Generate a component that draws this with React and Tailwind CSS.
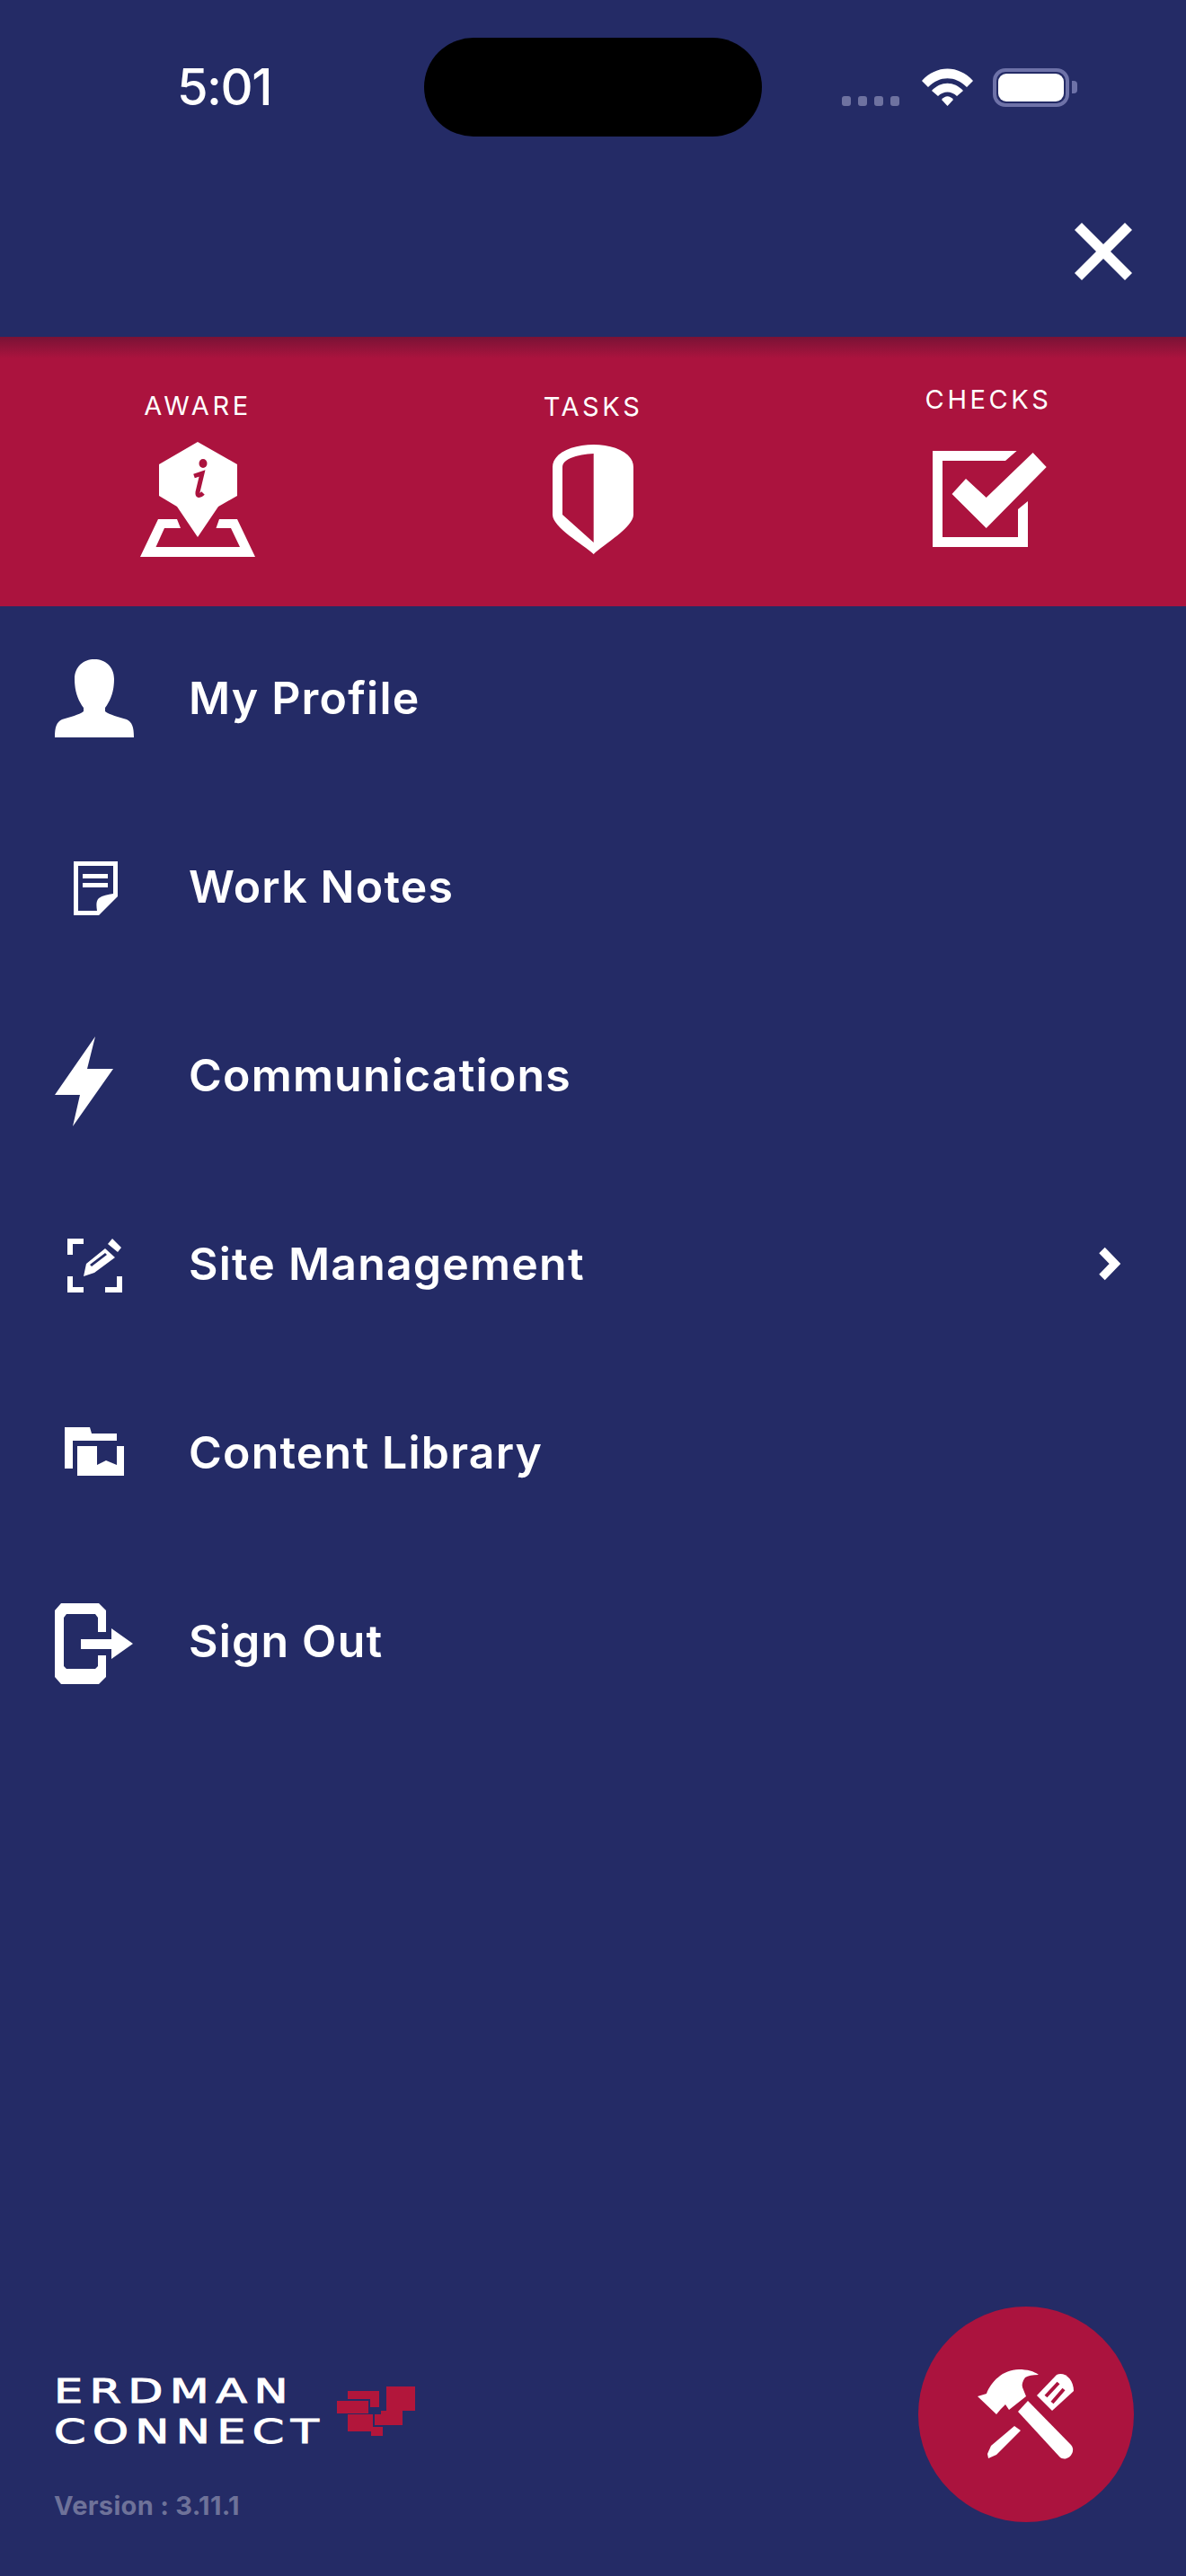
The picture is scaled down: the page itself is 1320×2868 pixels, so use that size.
const menu = [
  ["My Profile", "profile"],
  ["Work Notes", "notes"],
  ["Communications", "bolt"],
  ["Site Management", "site", true],
  ["Content Library", "library"],
  ["Sign Out", "signout"],
];

function Svg({ box, children }) {
  const [x, y, w, h] = box;
  return (
    <svg viewBox={`${x} ${y} ${w} ${h}`} width={w} height={h} className="overflow-visible" fill="white">
      {children}
    </svg>
  );
}

function MenuIcon({ name }) {
  if (name === "profile")
    return (
      <Svg box={[60, 732, 92, 90]}>
        <path d="M105 734C93 734 83 742 83 756C83 770 87 780 93 788V792C88 796 78 798 69 801C63 804 61 809 61 821H149C149 809 147 804 141 801C132 798 122 796 117 792V788C123 780 127 770 127 756C127 742 117 734 105 734Z" />
      </Svg>
    );
  if (name === "notes")
    return (
      <Svg box={[60, 942, 92, 90]}>
        <path fillRule="evenodd" d="M82 959H131V998L110 1019H82ZM87 964V1014H108C107 1007 107 1003 110 1000C114 997 120 996 126 995V964Z" />
        <rect x="92" y="973" width="28" height="5" />
        <rect x="92" y="983" width="28" height="5" />
      </Svg>
    );
  if (name === "bolt")
    return (
      <Svg box={[60, 1152, 92, 90]}>
        <path d="M106 1154L61 1219L89 1219L81 1254L126 1190L97 1190Z" />
      </Svg>
    );
  if (name === "site")
    return (
      <Svg box={[60, 1362, 92, 90]}>
        <path d="M75 1379H93V1385H81V1397H75ZM75 1421H81V1433H93V1439H75ZM117 1433H130V1421H136V1439H117Z" />
        <path d="M125 1379L135 1389L131 1394L120 1385Z" />
        <path fillRule="evenodd" d="M117 1390L128 1400L105 1417L93 1421L96 1407ZM117 1395L100 1408L102 1410L119 1397Z" />
      </Svg>
    );
  if (name === "library")
    return (
      <Svg box={[60, 1572, 92, 90]}>
        <path d="M72 1589H100L102 1596H130V1604H81V1635H72Z" />
        <path d="M86 1610H108V1631L118 1626L130 1631V1610H138V1643H86Z" />
      </Svg>
    );
  return (
    <Svg box={[60, 1782, 92, 90]}>
      <path fillRule="evenodd" d="M68 1785H110L118 1793V1817H109V1801L106 1797H74L71 1801V1855L74 1858H106L109 1855V1843H118V1867L110 1875H68L61 1867V1793Z" />
      <path d="M90 1825H124V1813L148 1830L124 1847V1836H90Z" />
    </Svg>
  );
}

function Top({ label, children }) {
  return (
    <div className="flex flex-col items-center w-[160px]">
      <span className="text-[29px] tracking-[3.6px] leading-none text-white">{label}</span>
      {children}
    </div>
  );
}

export default function App() {
  return (
    <div
      className="w-[1320px] h-[2868px] bg-[#242b66] flex flex-col overflow-hidden text-white"
      style={{ fontFamily: "Inter, 'Liberation Sans', sans-serif" }}
    >
      <div className="h-[375px] shrink-0 flex flex-col">
        <div className="flex items-center h-[110px] mt-[42px]">
          <span className="w-[472px] pl-[197px] text-[56px] font-medium leading-none tracking-[-1.5px]">5:01</span>
          <div className="w-[376px] h-[110px] rounded-[55px] bg-black" />
          <div className="flex items-center ml-[89px]">
            <div className="flex gap-[8px] mt-[31px] w-[89px]">
              <span className="w-[10px] h-[11px] rounded-[3px] bg-[#6e72a0]" />
              <span className="w-[10px] h-[11px] rounded-[3px] bg-[#6e72a0]" />
              <span className="w-[10px] h-[11px] rounded-[3px] bg-[#6e72a0]" />
              <span className="w-[10px] h-[11px] rounded-[3px] bg-[#6e72a0]" />
            </div>
            <svg viewBox="0 0 57 42" width="57" height="42" fill="white" className="mr-[22px]">
              <path d="M0 14C16 -4 41 -4 57 14L50 21C37 8 20 8 7 21Z" />
              <path d="M11 25C21 14 36 14 46 25L39 31C33 25 24 25 18 31Z" />
              <path d="M22 35C26 30 31 30 35 35L28.500 42Z" />
            </svg>
            <div className="flex items-center">
              <div className="w-[85px] h-[43px] rounded-[14px] border-[4px] border-[#6e72a8] p-[2px]">
                <div className="w-full h-full rounded-[9px] bg-white" />
              </div>
              <span className="w-[6px] h-[14px] rounded-r-[4px] bg-[#6e72a8] ml-[3px]" />
            </div>
          </div>
        </div>
        <div className="flex justify-end pr-[60px] mt-[96px]">
          <svg viewBox="0 0 64 64" width="64" height="64" fill="white">
            <path d="M8 0L32 24L56 0L64 8L40 32L64 56L56 64L32 40L8 64L0 56L24 32L0 8Z" />
          </svg>
        </div>
      </div>

      <div className="h-[300px] shrink-0 bg-[#ab133e] relative flex justify-between px-[140px]">
        <div className="absolute inset-x-0 top-0 h-[24px] bg-gradient-to-b from-[#7a1235] to-[#ab133e]" />
        <div className="relative mt-[62px]">
          <Top label="AWARE">
            <svg viewBox="150 488 140 136" width="140" height="136" className="mt-[22px]" fill="white">
              <path d="M220 492L264 517V552L243 564L220 598L197 564L177 552V517Z" />
              <path d="M176 578H197L201 588H183L173.500 609H267L257 588H240.500L244 578H264L284 620H156Z" />
              <ellipse cx="226" cy="516" rx="4.500" ry="5" fill="#ab133e" />
              <path d="M216 530L225 527L220 548C219.500 552 222 553 226 549" fill="none" stroke="#ab133e" strokeWidth="5" />
            </svg>
          </Top>
        </div>
        <div className="relative mt-[63px]">
          <Top label="TASKS">
            <svg viewBox="610 492 100 128" width="100" height="128" className="mt-[25px]" fill="white">
              <path fillRule="evenodd" d="M660.700 495C683 495 705 504 705 520V573C705 587 672 606 660.700 617C649 606 615 587 615 573V520C615 504 638 495 660.700 495ZM660.700 505C645 506 626 510 626 520V573L660.700 604Z" />
            </svg>
          </Top>
        </div>
        <div className="relative mt-[55px]">
          <Top label="CHECKS">
            <svg viewBox="1032 498 136 116" width="136" height="116" className="mt-[39px] ml-[2px]" fill="white">
              <path d="M1037 502H1130.600L1118 513H1048V598H1132V567L1143 558V609H1037Z" />
              <path d="M1058.500 550L1074 533L1096.700 554L1148.600 504L1163.700 520L1096.700 588Z" />
            </svg>
          </Top>
        </div>
      </div>

      <div className="flex flex-col -mt-[3px]">
        {menu.map(([label, icon, chevron]) => (
          <div key={label} className="h-[210px] flex items-center pl-[60px] pr-[72px]">
            <div className="w-[92px] h-[90px] shrink-0">
              <MenuIcon name={icon} />
            </div>
            <span className="ml-[58px] text-[50px] font-semibold leading-none tracking-[1.2px]">{label}</span>
            {chevron && (
              <svg viewBox="0 0 26 38" width="26" height="38" fill="none" stroke="white" strokeWidth="9" className="ml-auto">
                <path d="M4.500 4L19 19L4.500 34" />
              </svg>
            )}
          </div>
        ))}
      </div>

      <div className="mt-auto h-[363px] flex justify-between items-start pl-[60px] pr-[58px]">
        <div className="flex flex-col mt-[135px]">
          <div className="flex items-start">
            <div
              className="w-[315px] flex flex-col text-[38px] leading-[45px] tracking-[5.500px] origin-left scale-x-[1.34] [-webkit-text-stroke:1px_white]"
              style={{ fontFamily: "'DejaVu Sans', sans-serif" }}
            >
              <span>ERDMAN</span>
              <span>CONNECT</span>
            </div>
            <svg viewBox="375 2655 88 58" width="88" height="58" fill="#b2163b" className="mt-[15px]">
              <rect x="430" y="2657" width="32" height="27" />
              <rect x="375" y="2673" width="35" height="14" />
              <path d="M387 2662H422V2680H412V2671H387Z" />
              <rect x="387" y="2688" width="28" height="19" />
              <path d="M424 2684H448V2700H417V2688H424Z" />
              <rect x="413" y="2702" width="13" height="10" />
            </svg>
          </div>
          <span className="mt-[45px] text-[29px] font-bold leading-none tracking-[0.3px] text-[#6e7299]">Version : 3.11.1</span>
        </div>
        <div className="w-[240px] h-[240px] rounded-full bg-[#ab133e] flex items-center justify-center mt-[63px]">
          <svg viewBox="1081 2630 120 116" width="120" height="116" fill="white">
            <path d="M1087 2668L1097 2665C1102 2652 1115 2638 1133 2638C1142 2638 1150 2640 1155 2644C1148 2644 1143 2645 1140 2647C1137 2651 1136 2655 1137 2658L1141 2668L1122 2683L1118 2677L1113 2682L1108 2688Z" />
            <path d="M1132 2685L1143 2673L1191 2722C1198 2730 1186 2743 1178 2735Z" />
            <path d="M1153 2667L1175 2644C1183 2640 1194 2648 1194 2662L1170 2684Z" />
            <path d="M1163 2668L1177 2653M1170 2675L1183 2660" stroke="#ab133e" strokeWidth="4" fill="none" />
            <path d="M1128 2701L1135 2706L1108 2733L1099 2737L1098 2732L1102 2723Z" />
          </svg>
        </div>
      </div>
    </div>
  );
}
